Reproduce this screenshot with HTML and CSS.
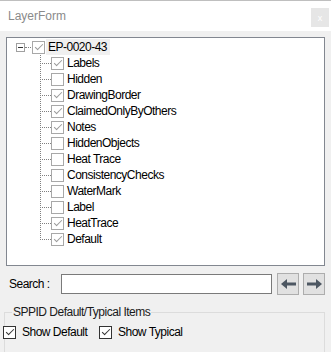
FILE: index.html
```html
<!DOCTYPE html>
<html lang="en">
	<head>
		<meta charset="UTF-8">
		<title>LayerForm</title>
		<link rel="stylesheet" href="styles.css">
	</head>
	<body>
		<div class="title-bar">
			<span class="title">LayerForm</span>
			<div class="close-btn">x</div>
		</div>

		<div class="content">
			<div class="tree">
				<div class="root-row">
					<span class="expander"><span class="minus"></span></span>
					<span class="root-link"></span>
					<span class="chk checked"></span>
					<span class="node-label selected">EP-0020-43</span>
				</div>
				<ul class="children">
					<li class="node"><span class="branch"></span><span class="chk checked"></span><span class="node-label">Labels</span></li>
					<li class="node"><span class="branch"></span><span class="chk"></span><span class="node-label">Hidden</span></li>
					<li class="node"><span class="branch"></span><span class="chk checked"></span><span class="node-label">DrawingBorder</span></li>
					<li class="node"><span class="branch"></span><span class="chk checked"></span><span class="node-label">ClaimedOnlyByOthers</span></li>
					<li class="node"><span class="branch"></span><span class="chk checked"></span><span class="node-label">Notes</span></li>
					<li class="node"><span class="branch"></span><span class="chk"></span><span class="node-label">HiddenObjects</span></li>
					<li class="node"><span class="branch"></span><span class="chk"></span><span class="node-label">Heat Trace</span></li>
					<li class="node"><span class="branch"></span><span class="chk"></span><span class="node-label">ConsistencyChecks</span></li>
					<li class="node"><span class="branch"></span><span class="chk"></span><span class="node-label">WaterMark</span></li>
					<li class="node"><span class="branch"></span><span class="chk"></span><span class="node-label">Label</span></li>
					<li class="node"><span class="branch"></span><span class="chk checked"></span><span class="node-label">HeatTrace</span></li>
					<li class="node last"><span class="branch"></span><span class="chk checked"></span><span class="node-label">Default</span></li>
				</ul>
			</div>

			<div class="search-row">
				<span class="search-label">Search :</span>
				<input class="search-input" type="text">
				<button class="arrow-btn">
					<svg width="15" height="10" viewBox="0 0 15 10">
						<polygon points="0,5 6,0 6,10" fill="#4d5762"/>
						<rect x="5" y="3.5" width="10" height="3" fill="#4d5762"/>
					</svg>
				</button>
				<button class="arrow-btn">
					<svg width="15" height="10" viewBox="0 0 15 10">
						<polygon points="15,5 9,0 9,10" fill="#4d5762"/>
						<rect x="0" y="3.5" width="10" height="3" fill="#4d5762"/>
					</svg>
				</button>
			</div>

			<fieldset class="group">
				<legend>SPPID Default/Typical Items</legend>
				<div class="option-row">
					<div class="option option-default"><span class="chk dark checked"></span>Show Default</div>
					<div class="option"><span class="chk dark checked"></span>Show Typical</div>
				</div>
			</fieldset>
		</div>
	</body>
</html>
```

FILE: styles.css
```css
* {
    margin: 0;
    padding: 0;
    box-sizing: border-box;
}

body {
    font-family: "Liberation Sans", Arial, sans-serif;
    font-size: 12px;
    letter-spacing: -0.5px;
    color: #000;
    background: #f0f0f0;
    width: 331px;
    height: 352px;
    overflow: hidden;
}

.title-bar {
    height: 31px;
    background: #fff;
    border-top: 1px solid #bfbfbf;
    display: flex;
    align-items: center;
    justify-content: space-between;
    padding: 0 2px 0 8px;
}

.title {
    color: #8a8a8a;
    font-size: 12px;
    letter-spacing: 0;
}

.close-btn {
    align-self: flex-start;
    margin-top: 7px;
    width: 18px;
    height: 19px;
    background: #e6e6e6;
    color: #fff;
    font-size: 9px;
    letter-spacing: 0;
    display: flex;
    align-items: center;
    justify-content: center;
}

.content {
    padding: 6px 6px 0;
}

/* Tree */
.tree {
    height: 229px;
    background: #fff;
    border: 1px solid #828790;
    padding-top: 1px;
}

.root-row {
    height: 16px;
    display: flex;
    align-items: center;
    padding-left: 9px;
}

.expander {
    width: 9px;
    height: 9px;
    border: 1px solid #a0a0a0;
    display: flex;
    align-items: center;
    justify-content: center;
}

.minus {
    width: 5px;
    height: 1px;
    background: #333;
}

.root-link {
    width: 7px;
    height: 1px;
    background-image: repeating-linear-gradient(to right, #808080 0 1px, transparent 1px 2px);
    background-position: 1px 0;
}

.chk {
    width: 13px;
    height: 13px;
    border: 1px solid #a8a8a8;
    background: #fff;
    flex-shrink: 0;
    display: flex;
    align-items: center;
    justify-content: center;
}

.chk.checked::after {
    content: "";
    width: 3px;
    height: 7px;
    margin-top: -2px;
    border-right: 1px solid #9a9a9a;
    border-bottom: 1px solid #9a9a9a;
    transform: rotate(45deg);
}

.node-label {
    height: 16px;
    line-height: 16px;
    white-space: nowrap;
    margin-left: 3px;
}

.node-label.selected {
    margin-left: 1px;
    padding: 0 3px 0 2px;
    background: #f0f0f0;
}

.children {
    list-style: none;
}

.node {
    height: 16px;
    display: flex;
    align-items: center;
    padding-left: 33px;
}

.branch {
    width: 11px;
    height: 16px;
    flex-shrink: 0;
    background-image:
        repeating-linear-gradient(to bottom, #808080 0 1px, transparent 1px 2px),
        repeating-linear-gradient(to right, #808080 0 1px, transparent 1px 2px);
    background-size: 1px 100%, 10px 1px;
    background-position: 0 0, 2px 8px;
    background-repeat: no-repeat;
}

.node.last .branch {
    background-size: 1px 9px, 10px 1px;
}

/* Search */
.search-row {
    margin-top: 7px;
    height: 22px;
    display: flex;
    align-items: center;
}

.search-label {
    width: 55px;
    padding-left: 3px;
}

.search-input {
    width: 212px;
    height: 20px;
    border: 1px solid #7a7a7a;
    background: #fff;
    outline: none;
}

.arrow-btn {
    width: 22px;
    height: 22px;
    margin-left: 5px;
    background: #e1e1e1;
    border: 1px solid #adadad;
    display: flex;
    align-items: center;
    justify-content: center;
}

.arrow-btn + .arrow-btn {
    margin-left: 4px;
}

/* Group box */
.group {
    margin: 10px 0 0 -2px;
    width: 321px;
    height: 50px;
    border: 1px solid #dcdcdc;
    padding: 0;
}

legend {
    margin-left: 7px;
    padding: 0 1px;
    font-size: 12px;
    color: #1a1a1a;
}

.option-row {
    display: flex;
    align-items: center;
    height: 16px;
    margin: 5px 0 0 -2px;
}

.option {
    display: flex;
    align-items: center;
    gap: 6px;
}

.option-default {
    width: 96px;
}

.chk.dark {
    border-color: #333;
}

.chk.dark.checked::after {
    border-color: #333;
}
```
